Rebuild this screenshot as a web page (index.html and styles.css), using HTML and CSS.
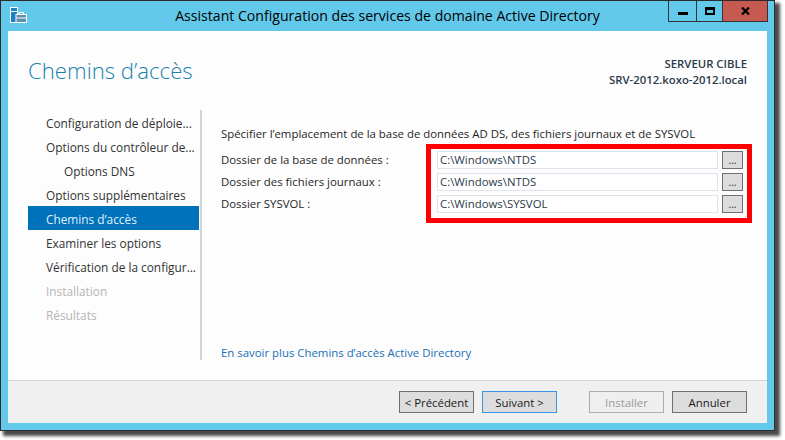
FILE: index.html
```html
<!DOCTYPE html>
<html lang="fr">
<head>
<meta charset="utf-8">
<title>Assistant Configuration des services de domaine Active Directory</title>
<link rel="stylesheet" href="styles.css">
</head>
<body>
<div class="window">
  <header class="titlebar">
    <svg class="app-icon" width="17" height="17" viewBox="0 0 17 17">
      <rect x="0.5" y="0.5" width="7" height="15" fill="#1d7fc4" stroke="#fff"/>
      <rect x="1" y="4" width="6" height="1" fill="#fff"/>
      <rect x="6" y="7.5" width="10.5" height="8" fill="#5e8fae" stroke="#fff"/>
      <path d="M9 7.5V5.5H13.500V7.500" fill="none" stroke="#fff"/>
      <rect x="6.500" y="10.500" width="10" height="1" fill="#fff"/>
    </svg>
    <div class="wintitle">Assistant Configuration des services de domaine Active Directory</div>
    <div class="controls">
      <div class="ctl ctl-min"><span class="min-glyph"></span></div>
      <div class="ctl ctl-max"><span class="max-glyph"></span></div>
      <div class="ctl ctl-close"><svg width="9" height="8" viewBox="0 0 9 8"><path d="M1 0.500L8 7.500M8 0.500L1 7.500" stroke="#000" stroke-width="2.200" fill="none"/></svg></div>
    </div>
  </header>
  <div class="client">
    <div class="head">
      <h1 class="page-title">Chemins d’accès</h1>
      <div class="target">
        <div>SERVEUR CIBLE</div>
        <div>SRV-2012.koxo-2012.local</div>
      </div>
    </div>
    <div class="main">
      <nav class="nav">
        <div class="nav-item">Configuration de déploie...</div>
        <div class="nav-item">Options du contrôleur de...</div>
        <div class="nav-item sub">Options DNS</div>
        <div class="nav-item">Options supplémentaires</div>
        <div class="nav-item active">Chemins d’accès</div>
        <div class="nav-item">Examiner les options</div>
        <div class="nav-item">Vérification de la configur...</div>
        <div class="nav-item disabled">Installation</div>
        <div class="nav-item disabled">Résultats</div>
      </nav>
      <section class="content">
        <p class="intro">Spécifier l’emplacement de la base de données AD DS, des fichiers journaux et de SYSVOL</p>
        <div class="rows">
          <div class="row"><label class="lbl">Dossier de la base de données :</label><div class="field">C:\Windows\NTDS</div><div class="browse">...</div></div>
          <div class="row"><label class="lbl">Dossier des fichiers journaux :</label><div class="field">C:\Windows\NTDS</div><div class="browse">...</div></div>
          <div class="row"><label class="lbl">Dossier SYSVOL :</label><div class="field">C:\Windows\SYSVOL</div><div class="browse">...</div></div>
          <div class="highlight"></div>
        </div>
        <a class="more" href="#">En savoir plus Chemins d’accès Active Directory</a>
      </section>
    </div>
    <footer class="footer">
      <div class="btn">&lt; Précédent</div>
      <div class="btn focus">Suivant &gt;</div>
      <div class="btn off">Installer</div>
      <div class="btn">Annuler</div>
    </footer>
  </div>
</div>
</body>
</html>
```

FILE: styles.css
```css
* { box-sizing: border-box; }
html, body { margin: 0; padding: 0; background: #fff; }
body {
  width: 785px;
  height: 440px;
  overflow: hidden;
  font-family: "Open Sans", "Noto Sans", "Liberation Sans", sans-serif;
  font-size: 11.4px;
  color: #1f1f1f;
}
.window {
  width: 775px;
  height: 431px;
  background: #63c9eb;
  border: 1px solid #2b2b2b;
  box-shadow: 4px 4px 3px 1px #4a4a4a;
  display: flex;
  flex-direction: column;
}
.titlebar {
  height: 30px;
  flex: none;
  display: flex;
  align-items: flex-start;
  position: relative;
}
.app-icon { position: absolute; left: 9px; top: 6px; }
.wintitle {
  flex: 1;
  text-align: center;
  font-size: 14.1px;
  line-height: 30px;
  color: #000;
}
.controls {
  position: absolute;
  right: 6px;
  top: 0;
  display: flex;
  height: 21px;
  border: 1px solid #333;
  border-top: none;
}
.ctl { display: flex; align-items: center; justify-content: center; height: 100%; }
.ctl-min { width: 28px; border-right: 1px solid #333; }
.ctl-max { width: 26px; border-right: 1px solid #333; }
.ctl-close { width: 44px; background: #c75a50; }
.min-glyph { width: 10px; height: 3px; background: #000; margin-top: 4px; }
.max-glyph { width: 10px; height: 8px; border: 2px solid #000; border-top-width: 3px; }
.client {
  margin: 0 7px;
  height: 392px;
  background: #fdfdfd;
  display: flex;
  flex-direction: column;
}
.head {
  height: 79px;
  flex: none;
  display: flex;
  justify-content: space-between;
  padding: 25px 20px 0 20px;
}
.page-title {
  margin: 0;
  font-size: 22.2px;
  font-weight: 300;
  line-height: 30px;
  color: #1a81ad;
}
.target {
  text-align: right;
  font-size: 11.35px;
  font-weight: 600;
  line-height: 16px;
  color: #2b3a4a;
}
.main { flex: 1; display: flex; min-height: 0; }
.nav {
  width: 173px;
  height: 250px;
  margin-left: 20px;
  flex: none;
}
.nav-item {
  height: 24px;
  line-height: 26px;
  width: 171px;
  padding-left: 18px;
  font-size: 11.85px;
  color: #333;
  white-space: nowrap;
  overflow: hidden;
}
.nav-item.sub { padding-left: 36px; }
.nav-item.active { background: #0072bc; color: #dff1fb; }
.nav-item.disabled { color: #b5b5b5; }
.content {
  height: 250px;
  border-left: 2px solid #d4d4d4;
  margin-left: -1px;
  padding-left: 19px;
  flex: 1;
  display: flex;
  flex-direction: column;
  position: relative;
}
.intro { margin: 16px 0 0; line-height: 16px; color: #1f1f1f; white-space: nowrap; }
.rows { margin-top: 9px; display: flex; flex-direction: column; gap: 4px; position: relative; }
.row { display: flex; height: 18px; align-items: center; }
.lbl { width: 216px; flex: none; white-space: nowrap; color: #1f1f1f; line-height: 16px; height: 16px; margin-top: 1px; align-self: flex-start; }
.field {
  width: 281px;
  height: 18px;
  line-height: 16px;
  border: 1px solid #e2e2ea;
  background: #fff;
  padding-left: 2px;
  color: #2b3a4a;
}
.browse {
  width: 21px;
  height: 18px;
  margin-left: 4px;
  background: #dcdcdc;
  border: 1px solid #707070;
  text-align: center;
  line-height: 17px;
  font-size: 10px;
}
.highlight {
  position: absolute;
  left: 205px;
  top: -7px;
  width: 326px;
  height: 79px;
  border: 5px solid #f00;
}
.more {
  position: absolute;
  left: 19px;
  top: 235px;
  color: #1a6fb5;
  text-decoration: none;
  white-space: nowrap;
}
.footer {
  height: 43px;
  flex: none;
  background: #f0f0f0;
  border-top: 1px solid #d4d4d4;
  display: flex;
  padding: 10px 20px 0 0;
  justify-content: flex-end;
  gap: 8px;
}
.btn {
  width: 75px;
  height: 22px;
  background: #dddddd;
  border: 1px solid #707070;
  text-align: center;
  line-height: 21px;
  color: #1a1a1a;
}
.btn.focus { border-color: #3c93e6; margin-right: 24px; }
.btn.off { background: #efefef; border-color: #adadad; color: #9a9a9a; }
```
